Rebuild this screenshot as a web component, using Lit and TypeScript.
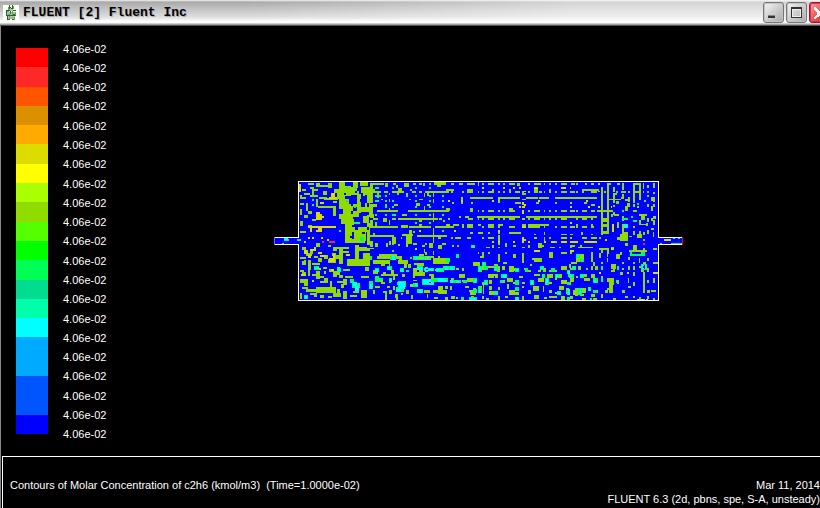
import { LitElement, html, svg, css } from "lit";
import { customElement } from "lit/decorators.js";

// Legend swatches from the highest level to the lowest.
const LEVELS = [
  "#ff0000", "#ff2828", "#ff5500", "#dc9000", "#ffaa00", "#dcdc00", "#ffff00",
  "#aaff00", "#90dc00", "#55ff00", "#00ff00", "#00ff55", "#00dc90", "#00ffaa",
  "#00ffff", "#00aaff", "#00aaff", "#0055ff", "#0055ff", "#0000ff",
];
const LABELS = Array.from({ length: 21 }, () => "4.06e-02");

type Layer = { fill: string; cells: string };
type Tile = { x: number; layers: Layer[] };

const OLIVE = "#90dc00";
const GOLD = "#dcdc00";
const GREEN = "#00ff55";
const CYAN = "#00ffff";
const RED = "#ff2828";
const BLUE = "#0000ff";

// Every entry is "x y width height" in mesh units, three units to a pixel.
const TILES: Tile[] = [
  {
    x: 0,
    layers: [
      {
        fill: OLIVE,
        cells: `115 24 18 6,97 42 12 6,121 36 12 6,91 60 6 12,97 66 12 6,103 54 18 6,121 60 24 6,
        127 42 6 24,133 42 12 6,139 24 12 12,139 30 45 6,175 24 12 16,193 42 15 12,201 48 12 24,
        160 48 12 12,148 66 24 6,139 72 6 24,145 93 54 6,163 69 42 6,190 78 12 6,91 84 12 6,
        91 102 6 18,109 84 6 24,115 108 12 9,190 93 9 30,
        207 21 18 80,213 33 48 15,207 48 36 15,225 72 12 36,243 48 24 12,231 87 42 9,219 96 30 21,
        207 117 42 15,213 126 12 21,225 132 27 18,249 108 18 18,261 57 12 57,249 21 15 18,270 21 24 12,
        273 36 18 27,273 96 21 15,285 84 12 24,279 123 18 21,225 150 15 51,243 156 48 15,252 171 36 27,
        225 192 60 12,291 36 9 90,291 144 9 66,234 108 12 90,
        91 138 9 15,103 120 12 9,127 132 12 6,115 150 12 6,91 168 18 6,139 204 12 12,175 210 9 6,
        201 216 36 6,207 222 12 45,213 228 24 6,190 216 12 12,195 240 24 12,231 252 69 20,255 210 12 42,
        267 216 33 12,279 234 21 18,97 216 12 9,109 234 18 9,91 246 18 6,97 258 12 12,115 255 9 30,
        127 264 24 6,175 252 24 12,163 240 12 12,115 285 6 18,139 288 12 24,151 303 12 6,91 285 12 6,
        91 312 24 12,103 318 12 15,139 336 60 18,109 342 42 9,91 354 6 18,151 318 24 6,190 288 12 18,
        201 276 9 24,177 282 12 9,160 276 12 6,219 282 21 6,225 303 24 6,201 318 18 6,219 312 12 18,
        190 354 24 12,219 348 12 24,249 348 18 6,273 303 24 6,285 276 12 12,273 345 18 24,240 360 21 6,
        175 362 12 6,180 318 6 18,133 354 9 12,103 255 6 12,121 228 9 9,133 243 12 6,
        145 249 12 12,187 234 12 9,97 291 12 6,127 297 12 6,163 309 12 15,163 288 6 9,
        207 300 12 9,213 327 9 12,97 336 18 6,121 354 12 6,151 360 12 9,201 342 9 12`,
      },
      {
        fill: BLUE,
        cells: `225 24 9 6,243 27 6 9,255 48 6 6,270 72 9 9,285 60 6 6,243 108 6 9,261 129 12 9,
        291 84 6 12,255 156 9 9,276 171 9 6,270 144 12 9,288 111 9 9,240 183 9 6,291 213 9 6,
        273 54 6 15,243 84 6 9,222 54 6 6,291 156 6 9,267 240 12 9,243 225 6 12`,
      },
      {
        fill: GOLD,
        cells: `87 27 6 24,183 54 12 18,177 66 24 5,150 81 12 6,139 111 12 24,145 117 12 18,157 123 6 6,
        115 153 84 5,145 153 12 18,139 165 15 6,121 153 6 18,115 186 6 6,127 186 6 6,153 186 6 6,
        171 192 6 6,103 198 6 6,121 222 12 6,103 225 12 12,115 240 9 9,133 216 6 12,
        145 230 12 6,151 240 18 6,177 249 18 12,190 237 6 12,228 237 12 6,93 297 15 6,127 315 6 6,
        139 279 15 6,183 282 9 6`,
      },
      {
        fill: GREEN,
        cells: `127 72 6 6,127 87 6 6,228 36 6 6,252 36 6 6,228 75 6 6,252 93 6 6,252 141 18 6,
        207 165 6 6,270 186 12 12,42 192 15 6,36 204 6 4,81 192 12 6,133 273 15 12,201 279 12 12,
        240 312 12 12,246 324 24 15,297 318 12 24,102 360 12 12,219 282 6 6`,
      },
      {
        fill: CYAN,
        cells: `42 188 12 8,136 276 12 6,249 321 12 12,255 330 12 18,300 324 6 15,105 363 6 6,204 282 6 6`,
      },
      { fill: RED, cells: `156 198 6 6,177 198 18 6` },
    ],
  },
  {
    x: 300,
    layers: [
      {
        fill: OLIVE,
        cells: `0 24 9 60,0 87 21 9,0 96 9 30,0 111 6 15,0 135 9 18,9 24 33 6,45 24 9 12,69 24 9 6,
        78 30 6 9,102 24 15 12,129 24 9 6,147 24 9 6,159 24 6 9,177 24 6 6,192 21 36 9,201 27 12 9,
        243 24 9 6,267 24 12 6,291 24 18 6,9 42 6 9,0 48 33 6,42 48 12 6,66 48 36 6,84 39 12 12,120 42 6 6,
        126 48 12 6,147 48 9 6,165 48 72 6,228 42 24 6,243 48 6 6,276 48 6 6,291 42 18 12,
        21 54 6 15,57 54 3 6,57 72 3 9,81 54 6 6,108 54 6 9,162 54 3 12,171 54 6 9,190 54 3 12,
        33 72 6 3,45 87 6 12,72 87 12 6,117 72 6 3,147 72 12 3,138 84 12 9,171 87 9 6,190 72 3 12,
        21 105 63 6,114 105 123 6,57 99 3 6,162 93 3 12,228 99 12 9,273 66 6 9,246 81 6 6,273 81 6 6,
        0 117 12 12,39 129 12 12,66 129 12 6,84 129 120 6,9 129 15 6,57 135 3 6,96 117 15 6,147 135 9 6,
        190 114 3 27,207 129 9 6,234 129 6 6,219 135 6 6,267 123 6 6,285 123 12 6,294 129 15 6,
        0 153 84 6,93 150 21 9,117 153 66 6,147 147 9 12,195 153 57 6,228 147 12 12,249 147 18 6,
        276 147 6 12,291 147 18 12,15 147 6 9,57 141 3 9,
        0 180 72 6,9 174 6 9,96 177 33 6,117 165 9 12,141 180 90 6,129 168 6 6,190 159 3 27,204 186 9 6,
        108 183 18 24,66 186 12 6,66 192 12 15,93 186 3 6,190 186 3 18,0 198 9 18,15 204 9 12,
        48 204 6 12,66 204 6 6,0 219 12 3,57 198 6 12,84 207 6 6,108 204 6 12,135 204 6 6,156 210 9 6,
        165 204 6 6,177 204 12 15,204 210 12 12,216 204 12 6,243 186 6 6,255 186 18 6,291 186 12 6,
        246 210 6 6,261 210 6 6,129 204 9 6,190 228 3 12,162 222 3 12,
        27 237 54 12,21 243 66 9,9 255 51 12,87 243 9 12,84 255 30 12,57 261 3 12,129 243 54 12,
        147 237 15 12,165 231 6 9,183 243 9 6,189 249 48 18,204 243 6 9,33 267 12 6,102 267 9 12,
        114 267 9 12,132 264 30 6,129 279 12 15,141 267 12 12,153 267 9 6,
        9 285 6 12,15 279 9 18,33 297 51 6,39 291 9 12,63 285 9 15,69 303 6 12,96 297 9 9,129 291 36 12,
        129 297 6 12,147 285 12 6,177 297 15 6,183 303 9 12,258 279 9 6,276 279 6 9,267 297 18 12,
        15 315 24 6,15 333 15 6,33 321 12 6,57 315 6 9,51 333 9 6,39 348 12 6,45 354 6 21,75 357 9 12,
        9 345 6 12,57 345 9 12,69 333 6 12,93 354 6 6,108 345 9 12,120 327 12 9,129 315 12 3,
        162 315 6 9,162 345 18 9,171 357 3 12,180 315 12 6,190 345 18 9,204 333 15 24,219 345 12 12,
        225 333 9 9,240 333 6 12,243 309 9 12,258 315 6 9,276 315 6 6,291 309 9 12,285 333 12 6,
        243 363 12 9,258 366 6 6,297 345 9 6,192 366 12 6,225 366 9 9,78 369 6 6,123 360 6 12`,
      },
      {
        fill: GOLD,
        cells: `234 75 6 6,273 75 6 6,147 165 6 6,135 219 6 6,252 165 6 6`,
      },
      {
        fill: GREEN,
        cells: `15 36 12 6,66 36 6 6,135 36 6 6,177 36 6 6,15 60 18 6,45 60 6 6,108 60 6 6,135 60 6 6,
        177 60 6 6,216 60 6 6,15 75 12 6,45 75 6 6,66 75 6 6,135 75 6 6,177 75 6 6,216 75 6 6,
        45 93 6 6,66 93 6 6,135 93 6 6,177 93 6 6,216 93 6 6,15 117 6 6,45 117 6 6,66 117 12 6,
        135 117 6 6,177 117 6 6,216 117 6 6,15 141 6 6,135 141 6 6,177 141 6 6,216 165 6 6,
        66 225 6 6,60 243 18 12,120 246 6 6,129 243 18 12,153 243 12 12,171 246 12 6,228 249 12 12,
        258 237 9 12,303 210 9 9,15 279 12 12,51 273 15 12,90 279 12 12,108 285 9 6,141 273 18 12,
        162 279 30 9,198 279 24 12,219 273 36 12,15 303 12 18,27 309 12 6,57 309 9 12,84 318 24 18,
        78 336 24 15,0 324 9 18,129 324 15 12,156 312 36 18,192 309 42 12,240 315 18 9,261 315 12 9,
        279 315 12 9,141 342 18 12,273 366 9 9,297 366 12 9,0 243 6 12`,
      },
      {
        fill: CYAN,
        cells: `66 243 9 12,135 246 9 6,153 246 9 6,171 246 6 6,51 276 12 9,15 282 9 9,90 282 9 9,
        141 276 15 9,165 276 9 15,174 282 15 6,195 282 24 6,225 276 9 9,240 276 9 9,81 321 24 9,
        87 330 18 12,78 342 15 9,0 327 6 15,135 324 6 9,159 312 24 15,180 321 12 9,204 309 18 12,
        216 315 15 6,240 315 9 9,147 345 9 9,261 318 6 6,60 312 6 9`,
      },
      { fill: BLUE, cells: `168 282 6 3,177 321 6 3` },
    ],
  },
  {
    x: 600,
    layers: [
      {
        fill: OLIVE,
        cells: `9 24 6 6,24 21 3 12,36 24 6 6,54 24 18 6,84 24 6 6,99 24 6 6,117 24 18 6,141 24 9 9,
        174 24 6 6,192 24 21 6,222 24 3 6,237 24 6 6,255 24 6 6,273 24 18 6,303 24 12 6,
        0 42 9 12,24 48 3 6,36 48 6 6,54 48 18 6,66 42 6 9,84 48 6 6,99 48 6 6,117 42 6 12,135 48 15 6,
        156 48 6 9,156 54 12 6,174 48 6 6,192 42 12 12,207 48 9 6,222 48 3 6,237 42 6 12,255 48 6 6,
        273 48 18 6,303 48 12 6,0 66 69 6,84 66 66 6,156 72 12 3,168 66 36 6,207 66 30 6,255 66 60 6,
        84 72 6 12,3 81 6 6,135 81 18 6,198 81 9 6,255 81 6 6,0 99 9 12,24 105 3 6,36 105 6 6,54 105 18 6,
        84 105 6 6,99 105 6 6,117 99 12 12,123 105 12 6,174 105 6 6,192 105 18 6,222 105 3 6,237 105 6 6,
        255 105 6 6,273 105 18 6,303 105 12 6,
        21 123 129 6,156 129 9 6,168 123 24 6,192 123 123 6,24 129 3 6,36 129 6 6,54 129 18 6,84 129 6 6,
        99 129 6 6,117 129 18 6,174 123 6 12,192 129 18 6,222 129 3 6,237 129 6 6,255 129 6 6,273 129 18 6,
        0 147 6 12,24 147 9 6,36 153 6 6,54 147 18 12,84 147 15 6,84 153 6 6,117 153 18 6,156 147 12 6,
        174 147 36 12,207 147 30 6,222 153 3 6,255 153 6 6,273 153 18 6,303 153 12 6,0 171 9 6,
        24 171 15 6,54 171 6 6,84 171 6 6,117 171 36 6,192 177 6 3,222 171 3 9,273 177 18 3,
        0 186 3 6,36 186 6 6,54 186 18 6,84 180 6 15,66 198 6 6,84 195 6 15,105 204 6 12,192 186 9 6,
        204 204 12 15,222 186 3 12,237 186 6 6,255 198 6 6,273 186 18 6,
        48 216 12 3,66 210 6 9,84 216 6 3,129 210 9 6,156 216 9 3,174 210 6 9,216 210 6 6,240 216 15 3,
        267 216 6 3,300 210 6 9,
        24 231 3 6,36 231 6 18,30 243 12 6,54 231 6 6,84 237 6 24,105 231 6 6,129 237 9 12,156 234 6 30,
        192 249 24 12,186 249 9 6,237 231 12 18,273 231 18 6,
        9 261 21 12,36 273 18 12,54 273 24 6,72 267 12 6,81 273 9 18,99 261 12 6,96 273 9 12,117 273 15 18,
        129 279 6 9,162 279 9 6,180 267 6 6,174 285 9 6,204 285 9 6,219 279 9 12,237 285 24 6,
        273 273 18 12,297 267 6 12,54 297 18 12,72 297 12 6,105 297 6 6,147 303 12 6,192 297 18 6,
        231 297 18 12,255 309 6 6,267 297 9 12,0 309 15 12,12 315 9 9,36 321 12 9,57 315 9 12,75 303 9 6,
        90 315 15 9,111 309 18 12,129 321 9 6,156 321 9 6,180 315 12 12,204 309 18 12,225 315 12 15,
        237 321 9 6,273 315 18 12,297 297 15 12,
        9 339 9 12,0 345 18 15,24 333 12 12,39 321 3 36,57 333 9 12,57 348 27 12,84 336 6 9,111 327 6 15,
        117 345 18 15,135 351 12 9,156 333 6 6,156 363 6 12,174 345 9 12,189 333 18 15,192 360 15 12,
        219 333 3 18,237 345 9 9,255 351 15 6,267 333 15 12,288 339 9 18,297 321 6 9,3 363 9 6,36 363 6 9,
        48 369 9 6,84 363 6 12,105 363 9 6,222 366 9 6,237 363 24 6,273 363 12 12`,
      },
      {
        fill: GOLD,
        cells: `36 36 6 6,99 36 6 6,129 36 6 6,147 36 6 6,192 36 12 6,273 36 15 6,66 75 6 6,204 75 6 6,
        162 48 6 3,156 81 6 9,162 87 6 6,147 93 6 6,156 93 9 6,156 105 6 12,84 165 6 6,156 153 12 6,
        156 186 6 12,162 192 6 6,156 198 6 6,66 198 6 6,129 198 6 6,174 198 6 6,192 225 18 6,243 198 12 6,
        273 198 18 6,84 198 6 6,300 198 6 6,222 198 6 6,300 141 6 6`,
      },
      {
        fill: GREEN,
        cells: `3 210 12 9,36 261 12 12,24 273 12 18,42 273 12 12,72 273 12 15,93 297 18 12,9 309 12 15,
        42 315 12 15,90 315 9 9,135 279 12 12,165 279 9 12,180 315 12 15,210 273 12 12,216 297 9 12,
        225 309 12 18,255 297 12 12,243 279 12 12,291 285 9 12,294 297 12 9,291 321 9 9,24 336 12 18,
        9 342 12 12,72 348 12 12,135 336 12 12,135 315 12 15,261 348 12 12,0 366 21 9,135 366 12 9,
        291 345 9 15,306 273 9 12,291 366 9 9`,
      },
      {
        fill: CYAN,
        cells: `6 213 6 3,39 264 6 6,27 276 6 12,75 276 6 9,99 300 9 9,12 315 6 9,45 318 6 9,138 282 6 6,
        183 318 6 9,228 312 6 12,258 300 6 6,27 342 6 12,75 351 6 6,264 351 6 6,3 369 15 6,138 369 6 6,
        294 288 6 9,213 276 6 6,294 342 6 18`,
      },
    ],
  },
  {
    x: 900,
    layers: [
      {
        fill: OLIVE,
        cells: `18 24 6 6,45 24 6 6,63 24 9 6,84 24 6 6,93 36 6 144,111 24 6 153,111 24 12 6,129 36 6 15,
        141 24 9 6,156 24 6 21,189 24 6 54,195 24 15 6,207 24 6 42,195 48 12 6,219 24 3 18,231 30 6 9,
        249 24 6 15,0 48 6 6,18 48 6 6,36 42 6 12,42 42 39 6,63 48 18 6,84 48 6 3,75 42 12 6,102 48 6 6,
        129 54 12 6,153 48 15 6,174 48 6 6,219 48 3 6,249 51 6 6,0 66 81 6,117 72 36 3,129 60 6 24,
        138 78 9 9,156 57 6 12,153 66 9 6,165 72 15 6,189 72 6 12,207 66 6 9,174 66 6 15,243 66 6 12,
        249 66 6 15,231 60 6 6,0 81 6 6,42 81 9 6,63 87 12 6,81 105 48 6,129 90 6 6,0 105 6 6,18 105 6 6,
        36 105 15 6,63 105 12 6,123 117 6 9,129 111 6 9,132 117 15 6,165 93 9 15,171 84 9 12,
        189 87 6 9,201 93 6 6,231 87 6 9,243 93 6 15,249 87 6 9,
        0 123 81 6,18 129 6 6,36 129 15 6,63 129 6 6,93 129 24 12,156 123 6 15,189 105 12 6,207 117 24 6,
        213 123 12 12,231 129 6 12,243 129 6 9,249 123 9 9,207 135 6 15,0 153 6 6,18 147 6 12,
        36 153 15 6,63 153 9 6,63 147 6 12,93 147 24 9,93 168 18 9,141 141 6 18,156 147 6 30,
        162 153 6 6,189 153 6 6,207 147 21 3,228 144 6 9,249 135 6 15,243 159 9 6,
        0 177 9 3,33 171 6 9,63 177 6 3,150 177 24 21,162 171 12 12,177 183 9 3,189 168 6 12,
        201 177 15 12,207 168 6 12,219 171 6 9,231 165 6 12,249 171 3 15,
        0 186 6 6,36 186 15 6,63 186 18 6,87 186 6 6,141 186 18 9,0 210 15 6,24 216 45 3,30 210 6 6,
        87 219 30 6,93 225 6 9,111 225 6 12,138 237 12 15,123 216 9 9,165 204 9 9,189 210 12 18,
        177 225 54 6,219 219 6 9,249 219 12 6,0 231 6 6,30 237 12 12,30 249 12 12,63 231 6 30,
        87 234 6 15,111 234 3 12,150 231 6 9,174 246 6 9,207 249 3 15,189 261 6 6,231 249 6 9,
        3 261 18 6,18 249 15 12,69 261 6 12,63 273 6 12,75 273 9 12,93 261 6 6,111 249 3 12,
        123 267 15 15,129 279 6 12,123 285 9 6,156 261 6 6,156 279 6 6,174 273 6 12,189 273 6 12,
        207 273 9 6,219 261 9 6,231 279 6 12,249 261 15 6,
        0 279 15 6,24 273 9 12,48 279 6 6,63 297 12 12,36 297 15 9,93 303 6 6,111 309 18 12,117 321 12 33,
        123 309 9 21,150 291 9 9,189 291 6 12,219 291 6 63,213 279 9 12,249 309 6 15,243 345 15 6,
        0 309 12 12,18 303 6 6,42 309 18 9,54 339 9 9,36 339 12 15,15 339 9 24,9 345 9 15,30 357 12 6,
        63 357 12 9,75 345 9 9,93 357 6 12,105 345 9 9,111 339 12 6,129 369 9 6,156 345 9 9,165 363 9 6,
        141 315 6 12,174 309 3 15,174 333 9 6,189 321 6 12,231 315 6 9,231 345 9 9,189 363 6 6,
        231 363 6 9,249 369 6 6,36 369 12 6,0 363 9 9,69 369 12 6`,
      },
      {
        fill: GOLD,
        cells: `0 36 3 6,48 75 6 6,54 93 6 6,0 93 6 6,84 93 6 6,123 93 3 6,126 147 6 24,0 198 24 6,42 198 39 6,
        0 225 12 6,123 219 6 6,105 192 6 6,249 291 15 6,87 291 6 6,201 372 24 3,228 372 6 3,282 192 21 6,
        123 219 9 3,171 291 6 6`,
      },
      {
        fill: GREEN,
        cells: `138 48 6 6,138 81 3 6,156 129 18 6,183 123 6 6,189 135 12 6,201 84 6 6,231 48 6 6,
        219 192 6 6,219 129 6 6,156 105 6 6,18 237 12 12,30 252 12 9,6 273 12 12,30 297 12 12,
        0 297 12 12,69 309 15 15,24 339 12 21,54 336 9 12,69 345 12 9,93 309 6 12,93 273 6 12,
        141 273 6 12,180 225 6 18,186 237 33 6,213 231 12 12,213 267 18 18,222 75 6 6,138 315 6 9,
        270 204 6 3,303 204 33 4,309 189 6 3,324 189 6 3,207 366 6 6,60 369 6 6`,
      },
      {
        fill: CYAN,
        cells: `162 147 12 12,21 240 6 6,33 255 6 3,9 276 6 6,33 300 6 6,0 300 9 6,72 315 6 6,27 342 6 15,
        216 270 12 12,57 339 3 9`,
      },
      { fill: BLUE, cells: `219 273 6 6,222 270 3 12` },
      { fill: RED, cells: `219 204 6 6` },
    ],
  },
];

const toPath = (cells: string) =>
  cells
    .split(",")
    .map((cell) => {
      const [x, y, w, h] = cell.trim().split(/\s+/);
      return `M${x} ${y}h${w}v${h}h-${w}z`;
    })
    .join("");

@customElement("title-bar")
class TitleBar extends LitElement {
  static styles = css`
    :host {
      display: flex;
      align-items: center;
      gap: 4px;
      height: 26px;
      box-sizing: border-box;
      padding-left: 3px;
      border-bottom: 1px solid #555;
      background: linear-gradient(#f4f4f4 0, #a9a9a9 2px, #bcbcbc 7px, #dedede 17px, #f4f4f4 20px, #fff 21px, #fff 23px, #a0a0a0 24px);
      position: relative;
      isolation: isolate;
      overflow: hidden;
    }
    :host::before {
      content: "";
      position: absolute;
      z-index: -1;
      inset: 0 0 5px 0;
      background: linear-gradient(90deg, transparent 30%, rgba(255, 255, 255, 0.5) 70%);
    }
    .logo {
      display: block;
      flex: none;
    }
    .title {
      flex: 1;
      margin: 0;
      font: bold 13px/18px "Liberation Mono", monospace;
      color: #000;
      text-shadow: 1px 1px 0 #aaa;
      white-space: nowrap;
    }
    .buttons {
      display: flex;
      flex: none;
      gap: 2px;
      margin-right: -10px;
    }
    .button {
      width: 21px;
      height: 21px;
      padding: 0;
      border: 1px solid #777;
      border-radius: 3px;
      background: linear-gradient(135deg, #f4f4f4, #cfcfcf 50%, #aaa);
      box-shadow: inset 0 0 0 1px #c4c4c4;
    }
    .close {
      border-color: #a01038;
      background: linear-gradient(135deg, #ff9a9a, #f04848 60%, #e02c3c);
      box-shadow: inset 0 0 0 1px #d83858;
    }
    .glyph {
      display: block;
    }
  `;

  render() {
    return html`
      <svg class="logo" width="16" height="16" viewBox="0 0 16 16" shape-rendering="crispEdges" aria-hidden="true">
        <path fill="#fff" d="M0 0h16v16H0z" />
        <path fill="#9cc8b0" d="M6 3h4v3H6zM4 7h9v3H4zM5 11h7v3H5z" />
        <path fill="#166a2c" d="M6 0h1v4H6zM9 0h1v4H9zM7 2h1v1H7zM8 3h1v1H8zM3 5h4v1H3zM3 6h1v4H3zM10 5h3v1h-3zM4 10h3v1H4zM4 11h1v4H4zM9 10h3v1H9zM9 14h3v1H9z" />
        <path fill="#8aa018" d="M5 2h1v3H5zM10 1h1v3h-1zM4 6h2v1H4zM5 9h2v1H5zM9 6h1v4H9zM12 7h1v3h-1zM6 11h1v3H6zM9 12h1v1H9zM11 12h1v3h-1z" />
        <path fill="#48508a" d="M7 6h1v3H7zM10 9h2v1h-2zM3 10h1v1H3zM7 10h2v1H7zM12 10h1v1h-1zM5 14h2v1H5z" />
      </svg>
      <h1 class="title">FLUENT [2] Fluent Inc</h1>
      <div class="buttons">
        <button class="button" aria-label="Minimize">
          <svg class="glyph" width="19" height="19" shape-rendering="crispEdges">
            <path fill="#888" d="M4 12h7v1H4z" /><path fill="#333" d="M4 13h7v2H4z" />
          </svg>
        </button>
        <button class="button" aria-label="Maximize">
          <svg class="glyph" width="19" height="19" shape-rendering="crispEdges">
            <path fill="#333" fill-rule="evenodd" d="M4 4h11v11H4zM5 6v8h9V6z" />
            <path fill="#eee" fill-rule="evenodd" d="M5 6h9v8H5zM6 7v6h7V7z" />
          </svg>
        </button>
        <button class="button close" aria-label="Close">
          <svg class="glyph" width="19" height="19" shape-rendering="crispEdges">
            <path fill="#fff" d="M4 4h2v1h1v1h1v1h1v1h1v1h1v-1h1v-1h1v-1h1v-1h2v2h-1v1h-1v1h-1v2h1v1h1v1h1v2h-2v-1h-1v-1h-1v-1h-2v1h-1v1H7v1H6v1H4v-2h1v-1h1v-1h1V9H6V8H5V7H4z" />
          </svg>
        </button>
      </div>
    `;
  }
}

@customElement("color-legend")
class ColorLegend extends LitElement {
  static styles = css`
    :host {
      display: flex;
      gap: 15px;
      color: #fff;
      font: 11px/12px "Liberation Sans", Arial, sans-serif;
    }
    .scale {
      display: flex;
      flex-direction: column;
      width: 32px;
      margin: 9px 0 10px;
    }
    .swatch {
      flex: 1;
    }
    .labels {
      display: flex;
      flex-direction: column;
      margin: 0;
      padding: 0;
      list-style: none;
    }
    .label {
      flex: 1;
      display: flex;
      align-items: center;
      white-space: nowrap;
    }
  `;

  render() {
    return html`
      <div class="scale">
        ${LEVELS.map((color) => html`<div class="swatch" style="background:${color}"></div>`)}
      </div>
      <ol class="labels">
        ${LABELS.map((label) => html`<li class="label">${label}</li>`)}
      </ol>
    `;
  }
}

@customElement("contour-plot")
class ContourPlot extends LitElement {
  static styles = css`
    :host {
      display: block;
    }
    .mesh {
      display: block;
    }
  `;

  render() {
    return html`
      <svg class="mesh" width="410" height="120" viewBox="12 18 1230 360" shape-rendering="crispEdges" role="img"
        aria-label="Contours of molar concentration">
        <path fill="#0000ff" d="M87 21h1077v354H87zM12 189h75v18H12zM1164 189h72v18h-72z" />
        ${TILES.map(
          (tile) => svg`<g transform="translate(${tile.x} 0)">
            ${tile.layers.map((layer) => svg`<path fill=${layer.fill} d=${toPath(layer.cells)} />`)}
          </g>`
        )}
        <path fill="#fff" d="M84 18h1083v3H84zM84 375h1083v3H84zM84 18h3v171h-3zM84 207h3v171h-3zM1164 18h3v171h-3zM1164 207h3v171h-3zM12 186h75v3H12zM12 207h75v3H12zM1164 186h72v3h-72zM1164 207h72v3h-72z" />
        <path fill="#6464ff" d="M12 186h3v24h-3z" />
        <path fill="#ff0000" d="M1236 186h3v24h-3z" />
      </svg>
    `;
  }
}

@customElement("app-root")
class AppRoot extends LitElement {
  static styles = css`
    :host {
      display: flex;
      flex-direction: column;
      min-height: 100vh;
      overflow: hidden;
      background: #000;
      color: #fff;
      font: 11px/14px "Liberation Sans", Arial, sans-serif;
    }
    .view {
      flex: 1;
      display: flex;
      align-items: center;
      border-left: 1px solid #888;
    }
    .legend {
      align-self: stretch;
      margin: 13px 0 12px 15px;
    }
    .plot {
      margin-left: 168px;
    }
    .footer {
      border-left: 1px solid #888;
      padding-left: 1px;
    }
    .caption {
      display: flex;
      flex-wrap: wrap;
      justify-content: space-between;
      border-top: 1px solid #fff;
      border-left: 1px solid #fff;
      padding: 21px 0 2px 7px;
    }
    .line {
      margin: 0;
      white-space: pre;
    }
    .right {
      text-align: right;
    }
  `;

  render() {
    return html`
      <title-bar></title-bar>
      <main class="view">
        <color-legend class="legend"></color-legend>
        <contour-plot class="plot"></contour-plot>
      </main>
      <footer class="footer">
        <div class="caption">
          <p class="line">Contours of Molar Concentration of c2h6 (kmol/m3)  (Time=1.0000e-02)</p>
          <div class="right">
            <p class="line">Mar 11, 2014</p>
            <p class="line">FLUENT 6.3 (2d, pbns, spe, S-A, unsteady)</p>
          </div>
        </div>
      </footer>
    `;
  }
}
